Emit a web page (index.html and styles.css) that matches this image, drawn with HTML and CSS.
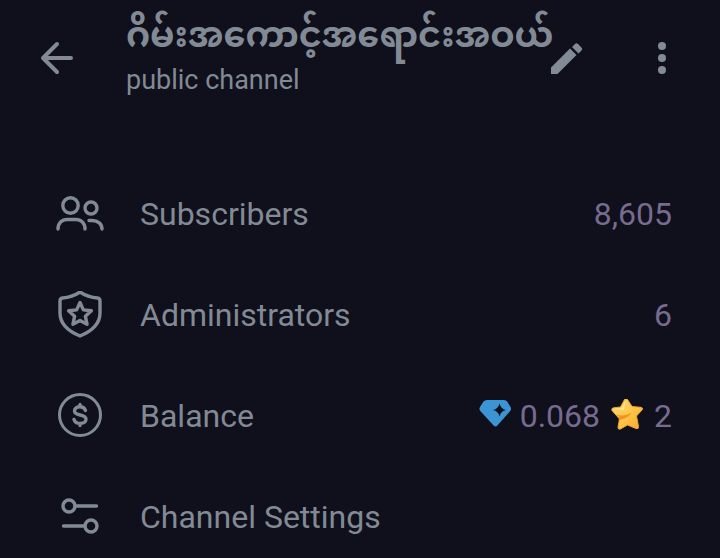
FILE: index.html
```html
<!DOCTYPE html>
<html lang="en">
<head>
  <meta charset="UTF-8">
  <meta name="viewport" content="width=device-width, initial-scale=1.0">
  <title>Channel info</title>
  <link rel="stylesheet" href="styles.css">
</head>
<body>

  <header class="topbar">
    <button class="icon-btn" type="button" aria-label="Back">
      <svg width="34" height="34" viewBox="0 0 34 34" fill="none" stroke="currentColor" stroke-width="4" stroke-linecap="round" stroke-linejoin="round">
        <path d="M31 17H3M17 3L3 17l14 14"/>
      </svg>
    </button>
    <div class="heading">
      <h1 lang="my">ဂိမ်းအကောင့်အရောင်းအဝယ်</h1>
      <p>public channel</p>
    </div>
    <button class="icon-btn" type="button" aria-label="Edit">
      <svg width="34" height="34" viewBox="0 0 34 34" fill="currentColor">
        <path d="M1 26.500L20 7.500l6.500 6.500L7.500 33H1zM22 6L25 3q1.500-1.500 3 0l3.500 3.500q1.500 1.500 0 3L28.500 12.500z"/>
      </svg>
    </button>
    <button class="icon-btn" type="button" aria-label="More options">
      <svg width="10" height="34" viewBox="0 0 10 34" fill="currentColor">
        <circle cx="5" cy="5" r="4"/>
        <circle cx="5" cy="17" r="4"/>
        <circle cx="5" cy="29" r="4"/>
      </svg>
    </button>
  </header>

  <nav class="menu">
    <a class="row" href="#subscribers">
      <svg class="row-icon" viewBox="0 0 48 48" stroke-width="3.4">
        <circle cx="14.5" cy="15.5" r="7.7"/>
        <circle cx="35" cy="18" r="6"/>
        <path d="M2 39c0-6 4-9.500 9-9.500h9c5 0 9 3.500 9 9.500M33 30.500h3c6 0 10 3.500 10 8.500"/>
      </svg>
      <span class="label">Subscribers</span>
      <span class="value">8,605</span>
    </a>
    <a class="row" href="#administrators">
      <svg class="row-icon" viewBox="0 1 48 48" stroke-width="3.4">
        <path d="M24 2C18 6 12 7.500 6.500 8Q4 8.300 4 11v12c0 11 9 18.500 20 23 11-4.500 20-12 20-23V11q0-2.700-2.500-3C36 7.500 30 6 24 2z"/>
        <path d="M24 12.500l3.400 7.400 8 .9-6 5.500 1.700 8L24 30.500l-7.100 3.800 1.700-8-6-5.500 8-.9z"/>
      </svg>
      <span class="label">Administrators</span>
      <span class="value">6</span>
    </a>
    <a class="row" href="#balance">
      <svg class="row-icon" viewBox="0 1 48 48" stroke-width="3">
        <circle cx="24" cy="24" r="20.5"/>
        <path stroke-width="3.4" d="M29.500 19.500c-.8-2.400-2.800-3.700-5.500-3.700-3.200 0-5.500 1.600-5.500 4.200 0 5.600 11.500 2.400 11.500 8.200 0 2.600-2.600 4.200-6 4.200-3.100 0-5.200-1.400-6-4M24 13.500v2M24 32.500v2"/>
      </svg>
      <span class="label">Balance</span>
      <span class="value">
        <svg class="gem" viewBox="0 2 34 34">
          <path fill="#3b94d3" d="M10 3h16q2 0 3.200 1.500l3.300 5.500q1.300 2-.3 4L19.400 28.500q-1.900 1.800-3.800 0L2.300 14Q.7 12 2 10l3.500-5.500Q6.800 3 9 3z"/>
          <path fill="#10111c" d="M21.500 6.500q1.200 5.300 6.500 6.500-5.300 1.200-6.500 6.500-1.200-5.300-6.500-6.500 5.300-1.200 6.500-6.500z"/>
        </svg>
        0.068
        <svg class="star" viewBox="0 2 34 34">
          <defs>
            <linearGradient id="gold" x1="0" y1="0" x2="1" y2="1">
              <stop offset="0" stop-color="#ffe07a"/>
              <stop offset=".5" stop-color="#ffc84a"/>
              <stop offset="1" stop-color="#f5a52c"/>
            </linearGradient>
          </defs>
          <path fill="url(#gold)" stroke="#eda234" stroke-width="1" stroke-linejoin="round" d="M14.500 2.500q1.500-2 3 0l4.500 7 9 .8q2.500.6 1 2.700l-5.500 6 2 10.500q.3 3-2.500 2L17.500 28l-7 4q-2.800 1-2.500-2l1.500-8-7.500-8.500q-1-2.200 1.500-2.700L10.500 10z"/>
          <path fill="#ef9420" d="M6 17.500c6 1.800 11 .8 15.500-2-2 4.300-6.500 6-13 8l1-3.500z"/>
          <path fill="#ffed9c" d="M15.500 4L12 11l-7 1 9 .7z"/>
        </svg>
        2
      </span>
    </a>
    <a class="row" href="#settings">
      <svg class="row-icon" viewBox="0 0 48 48" stroke-width="3.4">
        <circle cx="13" cy="13" r="6"/>
        <circle cx="35" cy="33" r="6"/>
        <path d="M19 13H40.500M7.500 33H29"/>
      </svg>
      <span class="label">Channel Settings</span>
    </a>
  </nav>

</body>
</html>
```
FILE: styles.css
```css
body {
  margin: 0;
  background: #0f101b;
  color: #828a95;
  font-family: Roboto, "Noto Sans", "Noto Sans Myanmar", sans-serif;
}

.topbar {
  display: flex;
  align-items: center;
  height: 116px;
  padding: 0 52px 0 40px;
}

.icon-btn {
  display: flex;
  flex: none;
  padding: 0;
  border: 0;
  background: none;
  color: inherit;
  cursor: pointer;
}

.icon-btn:last-child {
  margin-left: auto;
  padding: 0 1px;
}

.heading {
  display: flex;
  flex-direction: column;
  flex: 0 1 424px;
  min-width: 0;
  margin-left: 52px;
  padding-bottom: 4px;
}

.heading h1 {
  margin: 0;
  font-size: 35px;
  line-height: 48px;
  font-weight: 700;
  white-space: nowrap;
}

.heading p {
  margin: 0;
  font-size: 27px;
  line-height: 40px;
}

.menu {
  display: flex;
  flex-direction: column;
  gap: 20px;
  padding-top: 57px;
}

.row {
  display: flex;
  align-items: center;
  gap: 36px;
  height: 81px;
  padding: 0 48px 0 56px;
  color: inherit;
  font-size: 32px;
  line-height: 40px;
  text-decoration: none;
}

.row-icon {
  flex: none;
  width: 48px;
  height: 48px;
  fill: none;
  stroke: currentColor;
  stroke-linecap: round;
  stroke-linejoin: round;
}

.label {
  flex: 1;
}

.value {
  display: flex;
  align-items: center;
  gap: 8px;
  color: #786b90;
}

.gem,
.star {
  width: 34px;
  height: 34px;
}

.star {
  margin: 0 2px;
}
```
